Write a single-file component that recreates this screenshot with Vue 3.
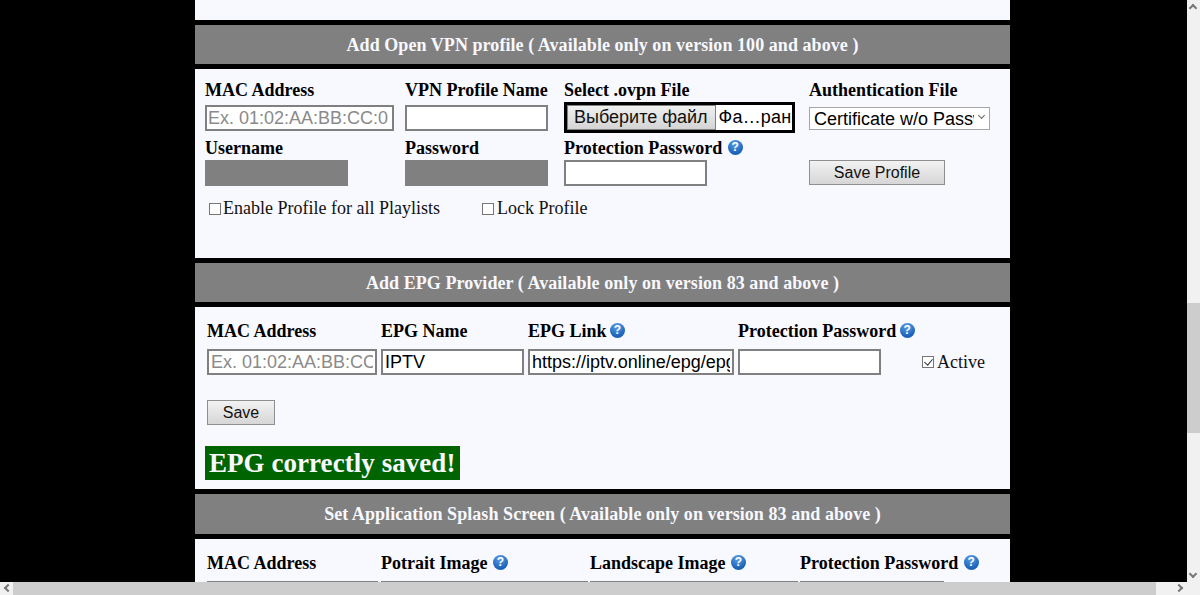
<script setup>
const splashCols = [
  { label: 'MAC Address', width: 171 },
  { label: 'Potrait Image', width: 207, help: true },
  { label: 'Landscape Image', width: 208, help: true },
  { label: 'Protection Password', width: 144, help: true },
]
</script>

<template>
  <div class="screen">
    <div class="viewport">
      <main class="page">
        <section class="panel panel--top"></section>

        <h2 class="bar">Add Open VPN profile ( Available only on version 100 and above )</h2>
        <section class="panel panel--vpn">
          <div class="vpn-grid">
            <div class="field">
              <label class="lbl">MAC Address</label>
              <div class="ctrl"><input class="inp inp--mac" placeholder="Ex. 01:02:AA:BB:CC:0" /></div>
            </div>
            <div class="field">
              <label class="lbl">VPN Profile Name</label>
              <div class="ctrl"><input class="inp inp--std" /></div>
            </div>
            <div class="field">
              <label class="lbl">Select .ovpn File</label>
              <div class="file">
                <button class="file__btn" type="button">Выберите файл</button>
                <span class="file__name">Фа…ран</span>
              </div>
            </div>
            <div class="field">
              <label class="lbl">Authentication File</label>
              <div class="ctrl">
                <span class="sel-wrap">
                  <select class="sel">
                    <option>Certificate w/o Password</option>
                  </select>
                </span>
              </div>
            </div>
            <div class="field">
              <label class="lbl">Username</label>
              <input class="inp inp--std inp--off" disabled />
            </div>
            <div class="field">
              <label class="lbl">Password</label>
              <input class="inp inp--std inp--off" disabled />
            </div>
            <div class="field">
              <label class="lbl">Protection Password <span class="help">?</span></label>
              <input class="inp inp--std" />
            </div>
            <div class="field field--btn">
              <button class="btn btn--profile" type="button">Save Profile</button>
            </div>
          </div>
          <div class="checks">
            <label class="chk chk--all"><input type="checkbox" />Enable Profile for all Playlists</label>
            <label class="chk"><input type="checkbox" />Lock Profile</label>
          </div>
        </section>

        <h2 class="bar">Add EPG Provider ( Available only on version 83 and above )</h2>
        <section class="panel panel--epg">
          <div class="epg-row">
            <div class="field">
              <label class="lbl">MAC Address</label>
              <input class="inp inp--epgmac" placeholder="Ex. 01:02:AA:BB:CC:DD" />
            </div>
            <div class="field">
              <label class="lbl">EPG Name</label>
              <input class="inp inp--epgname" value="IPTV" />
            </div>
            <div class="field">
              <label class="lbl">EPG Link <span class="help">?</span></label>
              <input class="inp inp--epglink" value="https://iptv.online/epg/epg.xml.gz" />
            </div>
            <div class="field">
              <label class="lbl">Protection Password <span class="help">?</span></label>
              <input class="inp inp--std" />
            </div>
            <label class="chk chk--active"><input type="checkbox" checked />Active</label>
          </div>
          <button class="btn btn--save" type="button">Save</button>
          <div class="saved">EPG correctly saved!</div>
        </section>

        <h2 class="bar bar--tall">Set Application Splash Screen ( Available only on version 83 and above )</h2>
        <section class="panel panel--splash">
          <div class="splash-row">
            <div v-for="col in splashCols" :key="col.label" class="field">
              <label class="lbl">{{ col.label }} <span v-if="col.help" class="help">?</span></label>
              <input class="inp inp--splash" :style="{ width: col.width + 'px' }" />
            </div>
          </div>
        </section>
      </main>

      <div class="vscroll">
        <span class="arrow arrow--up"></span>
        <div class="vscroll__track"><div class="vscroll__thumb"></div></div>
        <span class="arrow arrow--down"></span>
      </div>
    </div>

    <div class="hscroll">
      <span class="arrow arrow--left"></span>
      <div class="hscroll__thumb"></div>
      <div class="hscroll__track"></div>
      <span class="arrow arrow--right"></span>
      <div class="hscroll__corner"></div>
    </div>
  </div>
</template>

<style scoped>
.screen {
  background: #000;
  display: flex;
  flex-direction: column;
  height: 595px;
  overflow: hidden;
  width: 1200px;
}

.viewport {
  display: flex;
  flex: 1;
  min-height: 0;
}

.page {
  font-family: "Liberation Serif", serif;
  margin-left: 195px;
  overflow: hidden;
  width: 815px;
}

.panel {
  background: #f8f8ff;
  box-sizing: border-box;
}

.panel--top {
  height: 20px;
}

.panel--vpn {
  height: 189px;
  padding: 10px 10px 0;
}

.panel--epg {
  height: 182px;
  padding: 13px 12px 0;
}

.panel--splash {
  height: 60px;
  padding: 13px 12px 0;
}

.bar {
  background: #808080;
  color: #f8f8ff;
  font-size: 18px;
  font-weight: bold;
  height: 39px;
  letter-spacing: 0.06px;
  line-height: 40px;
  margin: 5px 0;
  text-align: center;
}

.bar--tall {
  height: 40px;
}

.vpn-grid {
  display: grid;
  grid-template-columns: 200px 159px 245px auto;
  row-gap: 4px;
}

.field {
  display: flex;
  flex-direction: column;
}

.field--btn {
  justify-content: flex-end;
  padding-bottom: 1px;
}

.ctrl {
  box-sizing: border-box;
  display: flex;
  height: 31px;
  padding-top: 3px;
}

.lbl {
  color: #000;
  font-size: 18px;
  font-weight: bold;
  height: 23px;
  line-height: 23px;
  white-space: nowrap;
}

.help {
  background: radial-gradient(circle at 45% 25%, #5d9ee6, #1a62b8 70%);
  border-radius: 50%;
  color: #fff;
  display: inline-block;
  font: bold 12px/15px "Liberation Sans", sans-serif;
  height: 15px;
  margin-left: 1px;
  text-align: center;
  vertical-align: 3px;
  width: 15px;
}

.epg-row .help {
  margin-left: -1px;
}

.inp {
  background: #fff;
  border: 2px solid #808080;
  box-sizing: border-box;
  color: #000;
  font: 18px "Liberation Sans", sans-serif;
  height: 26px;
  margin: 0;
  padding: 1px 2px;
}

.inp::placeholder {
  color: #8a8a8a;
}

.inp--mac { padding-left: 1px; width: 189px; }
.inp--std { width: 143px; }
.inp--off { background: #808080; border-color: #808080; }
.inp--epgmac { margin-top: 6px; width: 170px; }
.inp--epgname { margin-top: 6px; width: 143px; }
.inp--epglink { margin-top: 6px; width: 206px; }
.epg-row .inp--std { margin-top: 6px; }
.inp--splash { margin-top: 6px; }

.file {
  align-items: stretch;
  background: #fff;
  border: 3px solid #000;
  box-sizing: border-box;
  display: flex;
  height: 31px;
  width: 231px;
}

.file__btn {
  background: linear-gradient(#f0f0f0, #d4d4d4);
  border: 1px solid #808080;
  color: #111;
  font: 18px "Liberation Sans", sans-serif;
  padding: 0 7px 0 6px;
  white-space: nowrap;
}

.file__name {
  color: #000;
  font: 18px/25px "Liberation Sans", sans-serif;
  letter-spacing: 0.2px;
  padding-left: 3px;
  white-space: nowrap;
}

.sel-wrap {
  display: block;
  margin-top: -1px;
  position: relative;
}

.sel-wrap::after {
  border-bottom: 1px solid #666;
  border-right: 1px solid #666;
  content: "";
  height: 4px;
  pointer-events: none;
  position: absolute;
  right: 6px;
  top: 9px;
  transform: rotate(45deg);
  width: 4px;
}

.sel {
  appearance: none;
  background: #fff;
  border: 1px solid #a6a6a6;
  border-radius: 0;
  box-sizing: border-box;
  color: #000;
  display: block;
  font: 18px "Liberation Sans", sans-serif;
  height: 23px;
  margin-top: 3px;
  padding: 0 15px 0 4px;
  width: 181px;
}

.btn {
  background: linear-gradient(#f2f2f2, #d6d6d6);
  border: 1px solid #8f8f8f;
  color: #111;
  display: block;
  font: 16px "Liberation Sans", sans-serif;
  height: 25px;
  padding: 0;
}

.btn--profile { width: 136px; }

.btn--save {
  margin-top: 25px;
  width: 68px;
}

.checks {
  display: flex;
  margin-top: 12px;
  padding-left: 4px;
}

.chk {
  align-items: center;
  color: #111;
  display: flex;
  font-size: 18px;
}

.chk input {
  appearance: none;
  background: #fff;
  border: 1px solid #767676;
  box-sizing: border-box;
  height: 12px;
  margin: 0 2px 0 0;
  position: relative;
  width: 12px;
}

.chk input:checked::after {
  border-bottom: 1px solid #333;
  border-right: 1px solid #333;
  content: "";
  height: 7px;
  left: 3px;
  position: absolute;
  top: 0;
  transform: rotate(40deg);
  width: 4px;
}

.chk--all {
  margin-right: 42px;
}

.chk--all + .chk input {
  margin-right: 3px;
}

.epg-row {
  display: grid;
  grid-template-columns: 174px 147px 210px 174px auto;
}

.chk--active {
  align-self: end;
  height: 26px;
  margin-left: 10px;
}

.chk--active input {
  margin-right: 3px;
}

.saved {
  background: #006400;
  color: #f8f8ff;
  font-size: 27px;
  font-weight: bold;
  height: 34px;
  letter-spacing: 0.05px;
  line-height: 34px;
  margin: 21px 0 0 -2px;
  padding: 0 5px 0 4px;
  white-space: nowrap;
  width: fit-content;
}

.splash-row {
  display: grid;
  grid-template-columns: 174px 209px 210px auto;
}

.vscroll {
  background: #f1f1f1;
  display: flex;
  flex-direction: column;
  margin-left: auto;
  width: 13px;
}

.vscroll__track {
  flex: 1;
  padding-top: 290px;
}

.vscroll__thumb {
  background: #cdcdcd;
  height: 130px;
}

.hscroll {
  background: #f1f1f1;
  display: flex;
  flex: none;
  height: 13px;
}

.hscroll__thumb {
  background: #cdcdcd;
  width: 1143px;
}

.hscroll__track {
  flex: 1;
}

.hscroll__corner {
  width: 13px;
}

.arrow {
  flex: none;
  height: 13px;
  position: relative;
  width: 13px;
}

.arrow::after {
  border-left: 2px solid #777;
  border-top: 2px solid #777;
  content: "";
  height: 4px;
  left: 3px;
  position: absolute;
  top: 5px;
  width: 4px;
}

.arrow--up::after { transform: rotate(45deg); }
.arrow--down::after { transform: rotate(225deg); top: 2px; }
.arrow--left::after { transform: rotate(-45deg); left: 5px; top: 3px; }
.arrow--right::after { transform: rotate(135deg); left: 2px; top: 3px; }
</style>
